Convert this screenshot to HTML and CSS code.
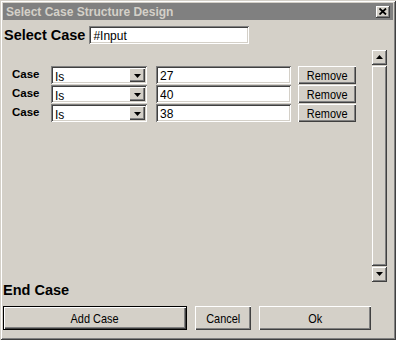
FILE: index.html
```html
<!DOCTYPE html>
<html lang="en">
<head>
  <meta charset="UTF-8">
  <title>Select Case Structure Design</title>
  <link rel="stylesheet" href="styles.css">
</head>
<body>
  <div class="window">
    <div class="titlebar">
      <span class="title">Select Case Structure Design</span>
      <div class="close-btn">
        <svg width="8" height="7" viewBox="0 0 8 7"><path d="M0.5 0.5L7 6.5M7 0.5L0.5 6.5" stroke="#000" stroke-width="1.8"/></svg>
      </div>
    </div>

    <div class="header">
      <span class="big-label">Select Case</span>
      <input class="field select-input" type="text" value="#Input">
    </div>

    <div class="main">
      <div class="cases">
        <div class="case-row">
          <span class="case-label">Case</span>
          <div class="field combo">
            <span class="combo-text">Is</span>
            <div class="combo-btn"><svg width="7" height="4" viewBox="0 0 7 4"><path d="M0 0H7L3.5 4Z" fill="#000"/></svg></div>
          </div>
          <input class="field value-input" type="text" value="27">
          <button class="btn remove-btn"><span class="btn-text">Remove</span></button>
        </div>
        <div class="case-row">
          <span class="case-label">Case</span>
          <div class="field combo">
            <span class="combo-text">Is</span>
            <div class="combo-btn"><svg width="7" height="4" viewBox="0 0 7 4"><path d="M0 0H7L3.5 4Z" fill="#000"/></svg></div>
          </div>
          <input class="field value-input" type="text" value="40">
          <button class="btn remove-btn"><span class="btn-text">Remove</span></button>
        </div>
        <div class="case-row">
          <span class="case-label">Case</span>
          <div class="field combo">
            <span class="combo-text">Is</span>
            <div class="combo-btn"><svg width="7" height="4" viewBox="0 0 7 4"><path d="M0 0H7L3.5 4Z" fill="#000"/></svg></div>
          </div>
          <input class="field value-input" type="text" value="38">
          <button class="btn remove-btn"><span class="btn-text">Remove</span></button>
        </div>
      </div>

      <div class="scrollbar">
        <div class="scroll-btn"><svg width="7" height="4" viewBox="0 0 7 4"><path d="M0 4H7L3.5 0Z" fill="#000"/></svg></div>
        <div class="scroll-thumb"></div>
        <div class="scroll-btn"><svg width="7" height="4" viewBox="0 0 7 4"><path d="M0 0H7L3.5 4Z" fill="#000"/></svg></div>
      </div>
    </div>

    <div class="big-label end-label">End Case</div>

    <div class="buttons">
      <button class="btn default-btn add-btn"><span class="btn-text">Add Case</span></button>
      <button class="btn cancel-btn"><span class="btn-text">Cancel</span></button>
      <button class="btn ok-btn"><span class="btn-text">Ok</span></button>
    </div>
  </div>
</body>
</html>
```

FILE: styles.css
```css
body {
  margin: 0;
  padding: 0;
  background-color: #d4d0c8;
  font-family: "Liberation Sans", Arial, sans-serif;
}

.window {
  width: 396px;
  height: 340px;
  box-sizing: border-box;
  padding: 3px;
  background-color: #d4d0c8;
  box-shadow: inset 1px 1px #d4d0c8, inset -1px -1px #404040,
              inset 2px 2px #fff, inset -2px -2px #808080;
  display: flex;
  flex-direction: column;
}

.titlebar {
  height: 17px;
  background-color: #808080;
  display: flex;
  align-items: center;
  justify-content: space-between;
  padding: 0 3px 0 3px;
}

.title {
  color: #d4d0c8;
  font-weight: bold;
  font-size: 12px;
}

.close-btn {
  width: 14px;
  height: 12px;
  background-color: #d4d0c8;
  box-shadow: inset -1px -1px #404040, inset 1px 1px #fff, inset -2px -2px #808080;
  display: flex;
  align-items: center;
  justify-content: center;
}

.big-label {
  font-weight: bold;
  font-size: 14.5px;
  line-height: 17px;
  color: #000;
}

.header {
  display: flex;
  align-items: center;
  gap: 4px;
  margin-top: 6px;
  padding-left: 1px;
}

/* sunken edit box */
.field {
  box-sizing: border-box;
  height: 18px;
  margin: 0;
  border: none;
  outline: none;
  background-color: #fff;
  box-shadow: inset 1px 1px #808080, inset -1px -1px #fff,
              inset 2px 2px #404040, inset -2px -2px #d4d0c8;
  font-family: "Liberation Sans", Arial, sans-serif;
  font-size: 12px;
  color: #000;
  padding: 2px 3px 0 4px;
}

.select-input {
  width: 160px;
}

.main {
  display: flex;
  margin-top: 5px;
  height: 233px;
}

.cases {
  flex: 1;
  display: flex;
  flex-direction: column;
  gap: 1px;
  padding: 17px 0 0 9px;
}

.case-row {
  display: flex;
  align-items: center;
  height: 18px;
}

.case-label {
  width: 39px;
  font-weight: bold;
  font-size: 11.5px;
  margin-top: -3px;
}

.combo {
  width: 96px;
  display: flex;
  align-items: center;
  justify-content: space-between;
  padding: 0 2px 0 4px;
}

.combo-text {
  padding-top: 3px;
}

.combo-btn {
  width: 16px;
  height: 14px;
  background-color: #d4d0c8;
  box-shadow: inset 1px 1px #fff, inset -1px -1px #404040, inset -2px -2px #808080;
  display: flex;
  align-items: center;
  justify-content: center;
  padding-top: 1px;
  box-sizing: border-box;
}

.value-input {
  width: 135px;
  margin-left: 9px;
}

.btn {
  margin: 0;
  padding: 0;
  border: none;
  background-color: #d4d0c8;
  box-shadow: inset 1px 1px #fff, inset -1px -1px #404040, inset -2px -2px #808080;
  font-family: "Liberation Sans", Arial, sans-serif;
  font-size: 13px;
  color: #000;
}

/* narrow face of the old dialog font */
.btn-text {
  display: inline-block;
  transform: scaleX(0.84);
}

.remove-btn {
  width: 58px;
  height: 18px;
  margin-left: 7px;
}

.scrollbar {
  width: 16px;
  margin-right: 6px;
  display: flex;
  flex-direction: column;
}

.scroll-btn {
  height: 16px;
  box-sizing: border-box;
  background-color: #d4d0c8;
  box-shadow: inset 1px 1px #d4d0c8, inset -1px -1px #404040,
              inset 2px 2px #fff, inset -2px -2px #808080;
  display: flex;
  align-items: center;
  justify-content: center;
}

.scroll-thumb {
  flex: 1;
  background-color: #d4d0c8;
  box-shadow: inset 1px 1px #d4d0c8, inset -1px -1px #404040,
              inset 2px 2px #fff, inset -2px -2px #808080;
}

.end-label {
  padding-left: 0;
}

.buttons {
  display: flex;
  margin-top: 7px;
}

.buttons .btn {
  height: 24px;
}

.default-btn {
  box-shadow: inset 1px 1px #000, inset -1px -1px #000,
              inset 2px 2px #fff, inset -2px -2px #404040, inset -3px -3px #808080;
}

.add-btn {
  width: 184px;
}

.cancel-btn {
  width: 56px;
  margin-left: 8px;
}

.ok-btn {
  width: 112px;
  margin-left: 8px;
}
```
